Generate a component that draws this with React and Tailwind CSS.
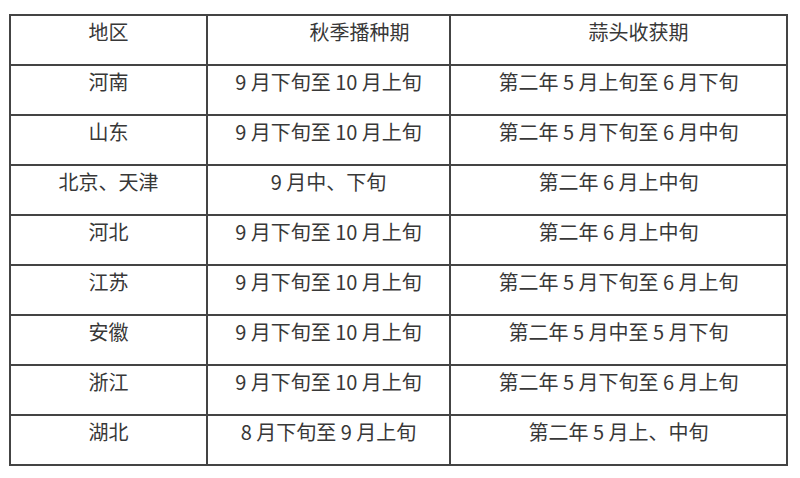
import React from 'react';

const rows = [
  ['河南', '9 月下旬至 10 月上旬', '第二年 5 月上旬至 6 月下旬'],
  ['山东', '9 月下旬至 10 月上旬', '第二年 5 月下旬至 6 月中旬'],
  ['北京、天津', '9 月中、下旬', '第二年 6 月上中旬'],
  ['河北', '9 月下旬至 10 月上旬', '第二年 6 月上中旬'],
  ['江苏', '9 月下旬至 10 月上旬', '第二年 5 月下旬至 6 月上旬'],
  ['安徽', '9 月下旬至 10 月上旬', '第二年 5 月中至 5 月下旬'],
  ['浙江', '9 月下旬至 10 月上旬', '第二年 5 月下旬至 6 月上旬'],
  ['湖北', '8 月下旬至 9 月上旬', '第二年 5 月上、中旬'],
];

const cell = 'border-2 border-[#444] align-top text-center pt-[3px] h-[50px] leading-[26px]';

const App = () => {
  return (
    <div
      className="w-[800px] h-[478px] bg-white pt-[14px] pl-[9px] text-[20px] text-[#383838]"
      style={{ fontFamily: '"Noto Sans CJK SC", "Noto Sans", sans-serif' }}
    >
      <table className="border-collapse table-fixed w-[777px]">
        <colgroup>
          <col className="w-[197px]" />
          <col className="w-[243px]" />
          <col className="w-[337px]" />
        </colgroup>
        <thead>
          <tr>
            <th className={cell + ' font-normal'}>地区</th>
            <th className={cell + ' font-normal pl-[62px]'}>秋季播种期</th>
            <th className={cell + ' font-normal pl-[40px]'}>蒜头收获期</th>
          </tr>
        </thead>
        <tbody>
          {rows.map((r) => (
            <tr key={r[0]}>
              <td className={cell}>{r[0]}</td>
              <td className={cell}>{r[1]}</td>
              <td className={cell}>{r[2]}</td>
            </tr>
          ))}
        </tbody>
      </table>
    </div>
  );
};

export default App;
